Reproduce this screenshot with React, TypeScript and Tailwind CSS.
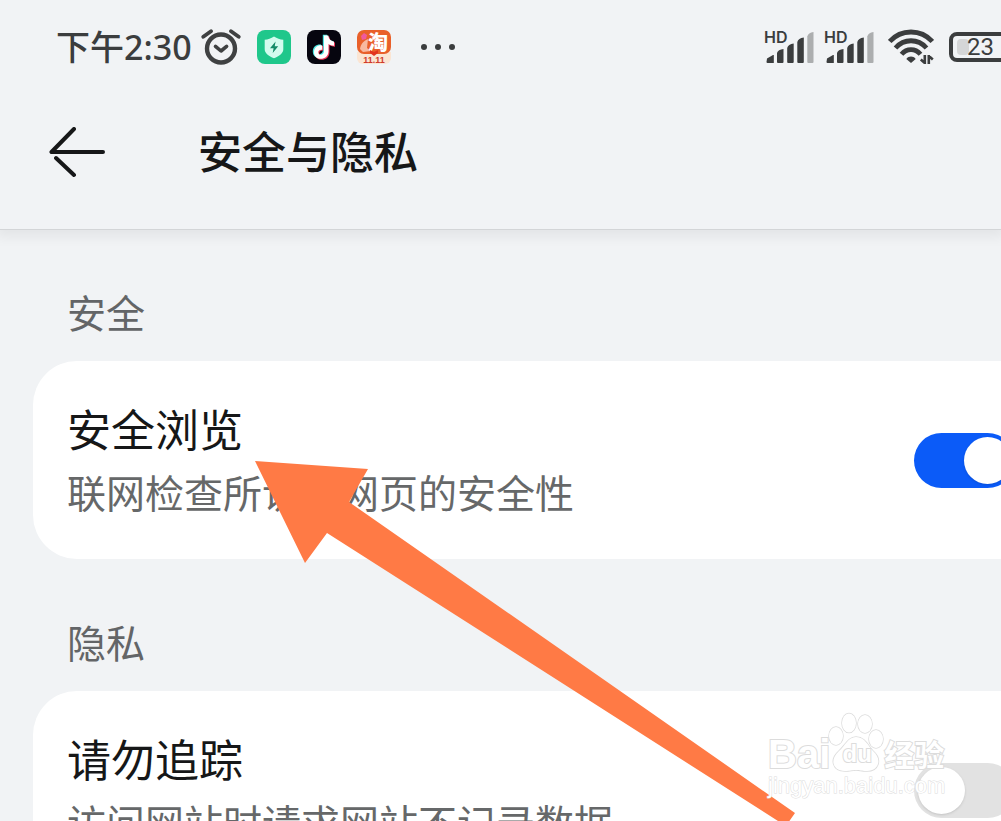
import { useId, useState } from 'react';

interface SettingRowProps {
  title: string;
  description: string;
  defaultOn?: boolean;
}

function AlarmIcon() {
  return (
    <svg viewBox="0 0 40 36" className="h-9 w-10" fill="none" stroke="#3f4142" strokeLinecap="round" strokeLinejoin="round" aria-hidden="true">
      <circle cx="20" cy="19.500" r="14" strokeWidth="4.400" />
      <path d="M14.500 17.300 20 22l5.600-4.700" strokeWidth="3.600" />
      <path d="M2.300 7.800 10 2.200M30 2.200l7.700 5.600" strokeWidth="3.800" />
    </svg>
  );
}

function ShieldAppIcon() {
  return (
    <svg viewBox="0 0 34 34" className="size-[34px]" aria-hidden="true">
      <rect width="34" height="34" rx="8" fill="#1fc78b" />
      <path d="M17 6.500c3 2 6 3 9.300 3.300v9.400c0 4-4 6.800-9.300 9-5.300-2.200-9.300-5-9.300-9V9.800C11 9.500 14 8.500 17 6.500Z" fill="#d3fbee" />
      <path d="M18.600 11.500 13 18.200h3.600l-.9 4.800 5.500-6.800h-3.500Z" fill="#128a67" />
    </svg>
  );
}

function TikTokIcon() {
  const note = 'M17 5.500h4.300c.3 3.800 2.500 5.800 5.700 6.100v4.200c-2.200 0-4-.6-5.500-1.700v7.200c0 9.600-14.500 10.200-14.500 1 0-5 4-7.600 8.200-7v4.500c-2-.6-3.900.5-3.900 2.400 0 3.600 5.700 3.500 5.700-.9Z';
  return (
    <svg viewBox="0 0 34 34" className="size-[34px]" aria-hidden="true">
      <rect width="34" height="34" rx="8" fill="#06050f" />
      <path d={note} fill="#4fe6e3" transform="translate(-1.200 -.7)" />
      <path d={note} fill="#f0395b" transform="translate(1 .9)" />
      <path d={note} fill="#fff" />
    </svg>
  );
}

function TaobaoIcon() {
  return (
    <svg viewBox="0 0 34 34" className="size-[34px] overflow-visible" aria-hidden="true">
      <path d="M0 22h34v6a6 6 0 0 1-6 6H6a6 6 0 0 1-6-6Z" fill="#fbe5d3" />
      <rect width="34" height="24" rx="7" fill="#e9602a" />
      <path d="M4 6 7 3l3 2-1 4-4 1Z" fill="#ef5a9e" />
      <path d="M3 19c1-6 4-8 8-10l-1 9 4 3-8 1Z" fill="#f8b9a0" />
      <text x="11" y="20" fontSize="20" fontWeight="900" fill="#fff" fontFamily="Noto Sans CJK SC, sans-serif">淘</text>
      <path d="m13 20 4 2 4-2v3l-4 3-4-3Z" fill="#e2331f" />
      <text x="17" y="33" fontSize="9" fontWeight="700" fill="#cf3b2c" textAnchor="middle" fontFamily="Liberation Sans, sans-serif">11.11</text>
    </svg>
  );
}

function SignalIcon() {
  return (
    <svg viewBox="0 0 50 34" className="h-[34px] w-[50px] overflow-visible" fill="#3b3d3e" aria-hidden="true">
      <text x="0" y="13" fontSize="16" fontWeight="600" fontFamily="Inter, sans-serif">HD</text>
      <path d="M3 28.500 9 25h.8v8H3.500a1 1 0 0 1-1-1Z" />
      <path d="M13 23q1-3.500 6.500-4v13a1 1 0 0 1-1 1H14a1 1 0 0 1-1-1Z" />
      <path d="M23.200 18q1-4 6.500-4.500V32a1 1 0 0 1-1 1h-4.500a1 1 0 0 1-1-1Z" />
      <path d="M33.300 12q1-4 6.500-4.500V32a1 1 0 0 1-1 1h-4.500a1 1 0 0 1-1-1Z" />
      <path d="M43.300 6.500q1-4 6.200-4.500v30a1 1 0 0 1-1 1h-4.200a1 1 0 0 1-1-1Z" fill="#acaeaf" />
    </svg>
  );
}

function WifiIcon() {
  return (
    <svg viewBox="0 0 46 36" className="h-9 w-[46px]" fill="none" stroke="#3b3d3e" strokeWidth="4.800" aria-hidden="true">
      <path d="M1.700 12.500C13-.2 33-.2 44.300 12.500" />
      <path d="M7.500 19c8.500-9.700 22.500-9.700 31 0" />
      <path d="M13.500 25.300c5.300-6.200 13.700-6.200 19 0" />
      <path d="M18.300 30c2.500-3.200 6.900-3.200 9.400 0L23 34Z" fill="#3b3d3e" stroke="none" />
      <path d="M36.800 26v9M40.800 35v-9M36.800 34l-4-3.500M40.800 27l4 3.500" strokeWidth="2.600" />
    </svg>
  );
}

function StatusBar() {
  return (
    <div className="-mr-6 flex h-24 items-center justify-between pb-[2px] pl-14 text-[#3b3d3e]">
      <div className="flex items-center">
        <time className="text-[34px] leading-none font-medium">下午2:30</time>
        <div className="ml-[9px] flex items-center gap-4">
          <AlarmIcon />
          <ShieldAppIcon />
          <TikTokIcon />
          <TaobaoIcon />
        </div>
        <div className="ml-[30px] flex gap-2">
          <span className="size-[6px] rounded-full bg-current" />
          <span className="size-[6px] rounded-full bg-current" />
          <span className="size-[6px] rounded-full bg-current" />
        </div>
      </div>
      <div className="flex items-center gap-[10px]">
        <SignalIcon />
        <SignalIcon />
        <div className="ml-1 flex items-center gap-[15px]">
          <WifiIcon />
          <div className="flex h-[30px] w-[76px] items-center rounded-lg border-4 border-current pl-1">
            <span className="h-4 w-3 rounded-sm bg-[#d5d6d7]" />
            <span className="-ml-[2px] font-[Roboto] text-2xl leading-none">23</span>
          </div>
        </div>
      </div>
    </div>
  );
}

function SettingRow({ title, description, defaultOn = false }: SettingRowProps) {
  const id = useId();
  const [on, setOn] = useState(defaultOn);

  return (
    <div className="-mr-12 ml-[33px] flex items-center justify-between rounded-[44px] bg-white px-[34px] pt-[39px] pb-[33px]">
      <label htmlFor={id} className="block whitespace-nowrap">
        <span className="block text-[44px] leading-[60px] text-[#161718]">{title}</span>
        <span className="block text-[39px] leading-[66px] text-[#666869]">{description}</span>
      </label>
      <input
        id={id}
        type="checkbox"
        role="switch"
        checked={on}
        onChange={(e) => setOn(e.target.checked)}
        className="mb-[6px] h-[55px] w-[101px] shrink-0 appearance-none rounded-full bg-[#e2e2e2] p-1 before:block before:size-[47px] before:rounded-full before:bg-white before:shadow-sm checked:bg-[#0b5bf8] checked:before:translate-x-[46px]"
      />
    </div>
  );
}

function SectionTitle({ children }: { children: string }) {
  return <h2 className="pt-[55px] pb-[19px] pl-[67px] text-[39px] leading-[58px] text-[#636567]">{children}</h2>;
}

function PointerArrow() {
  return (
    <svg viewBox="0 0 540 362" className="pointer-events-none absolute top-[461px] left-[255px] w-[540px]" aria-hidden="true">
      <path d="M0 0 113 8 94 41 540 352 533 362 523 360 72 72 50 102Z" fill="#ff7a45" />
    </svg>
  );
}

function Watermark() {
  return (
    <div className="pointer-events-none absolute top-[712px] left-[768px] font-['Liberation_Sans','Noto_Sans_CJK_SC',sans-serif] text-white [paint-order:stroke_fill] [-webkit-text-stroke:2px_#dcdcdc]">
      <div className="flex h-[62px] items-end">
        <span className="text-[40px] leading-10 font-bold">Bai</span>
        <div className="relative h-[60px] w-[54px]">
          <svg viewBox="0 0 54 60" className="h-[60px] w-[54px] overflow-visible" fill="#fff" stroke="#dcdcdc" strokeWidth="1.500" aria-hidden="true">
            <ellipse cx="6" cy="22" rx="7" ry="9" />
            <ellipse cx="19" cy="9" rx="7" ry="9.500" />
            <ellipse cx="35" cy="10" rx="7" ry="9" />
            <ellipse cx="46" cy="25" rx="7" ry="9" />
            <path d="M26 23c9 0 12 9 17 14 10 9 5 20-6 20-6 0-7-1-11-1s-6 1-11 1C3 57-1 46 9 37c6-5 9-14 17-14Z" />
          </svg>
          <span className="absolute inset-x-0 bottom-2 text-center text-2xl leading-6 font-bold">du</span>
        </div>
        <span className="text-[30px] leading-9 font-bold">经验</span>
      </div>
      <div className="text-[22px] leading-6 [-webkit-text-stroke:1px_#dcdcdc]">jingyan.baidu.com</div>
    </div>
  );
}

export default function App() {
  return (
    <div className="relative h-screen overflow-hidden bg-[#f1f3f5] font-['Noto_Sans','Noto_Sans_CJK_SC',sans-serif]">
      <header className="relative pb-[19px] shadow-[0_1px_0_#d3d5d7,0_4px_12px_4px_rgba(0,0,0,0.06)]">
        <StatusBar />
        <div className="flex h-[114px] items-center gap-[93px] pl-[49px]">
          <button type="button" aria-label="返回">
            <svg viewBox="0 0 56 52" className="h-[52px] w-14" fill="none" stroke="#161718" strokeWidth="4" strokeLinecap="round" aria-hidden="true">
              <path d="M25 2 2.500 25H54M7 31 25 48" strokeLinejoin="round" />
            </svg>
          </button>
          <h1 className="pb-[2px] text-[44px] leading-none font-medium text-[#161718]">安全与隐私</h1>
        </div>
      </header>

      <main>
        <section>
          <SectionTitle>安全</SectionTitle>
          <SettingRow title="安全浏览" description="联网检查所访问网页的安全性" defaultOn />
        </section>
        <section>
          <SectionTitle>隐私</SectionTitle>
          <SettingRow title="请勿追踪" description="访问网站时请求网站不记录数据" />
        </section>
      </main>

      <PointerArrow />
      <Watermark />
    </div>
  );
}
